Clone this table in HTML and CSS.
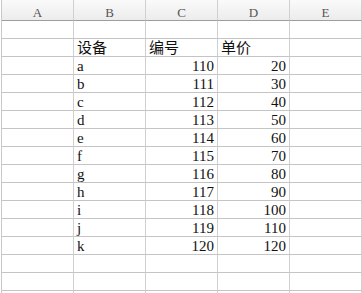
FILE: index.html
```html
<!DOCTYPE html>
<html lang="zh">
<head>
  <meta charset="UTF-8" />
  <title>Sheet1</title>
  <link rel="stylesheet" href="styles.css">
</head>
<body>

  <div class="viewport">
    <div class="sheet">
      <div class="col-head">A</div>
      <div class="col-head">B</div>
      <div class="col-head">C</div>
      <div class="col-head">D</div>
      <div class="col-head">E</div>
    </div>

    <div class="sheet" id="sheet-body"></div>
  </div>

  <script>
    const sheetBody = document.getElementById('sheet-body');

    // device, code, price
    const rows = [
      ['a', 110, 20], ['b', 111, 30], ['c', 112, 40], ['d', 113, 50],
      ['e', 114, 60], ['f', 115, 70], ['g', 116, 80], ['h', 117, 90],
      ['i', 118, 100], ['j', 119, 110], ['k', 120, 120]
    ];

    function addCell(text, cls) {
      const cell = document.createElement('div');
      cell.classList.add('cell');
      if (cls) cell.classList.add(cls);
      cell.textContent = text;
      sheetBody.appendChild(cell);
    }

    function addRow(values) {
      addCell('');
      addCell(values[0], 'text');
      addCell(values[1], typeof values[1] === 'number' ? 'num' : 'text');
      addCell(values[2], typeof values[2] === 'number' ? 'num' : 'text');
      addCell('');
    }

    addRow(['', '', '']);
    addRow(['设备', '编号', '单价']);
    rows.forEach(r => addRow(r));
    for (let i = 0; i < 3; i++) addRow(['', '', '']);
  </script>

</body>
</html>
```

FILE: styles.css
```css
body {
  margin: 0;
  background: #fff;
}

/* visible part of the worksheet */
.viewport {
  height: 293px;
  overflow: hidden;
}

.sheet {
  display: grid;
  grid-template-columns: repeat(5, 72px);
  margin-left: 1px;
  border-left: 1px solid #c8c8c8;
}

.col-head {
  box-sizing: border-box;
  height: 21px;
  border-right: 1px solid #d0d0d0;
  border-bottom: 1px solid #9e9e9e;
  background: linear-gradient(#fafafa, #ececec);
  font-family: "Liberation Serif", serif;
  font-size: 13px;
  color: #555;
  text-align: center;
  line-height: 25px;
}

.cell {
  box-sizing: border-box;
  height: 18px;
  border-right: 1px solid #d0d0d0;
  border-bottom: 1px solid #c4c4c4;
  padding: 0 3px;
  font-family: "Liberation Serif", "Noto Sans CJK SC", serif;
  font-size: 15px;
  line-height: 19px;
  color: #111;
  white-space: nowrap;
  overflow: hidden;
}

.num {
  text-align: right;
}

.text {
  text-align: left;
}
```
